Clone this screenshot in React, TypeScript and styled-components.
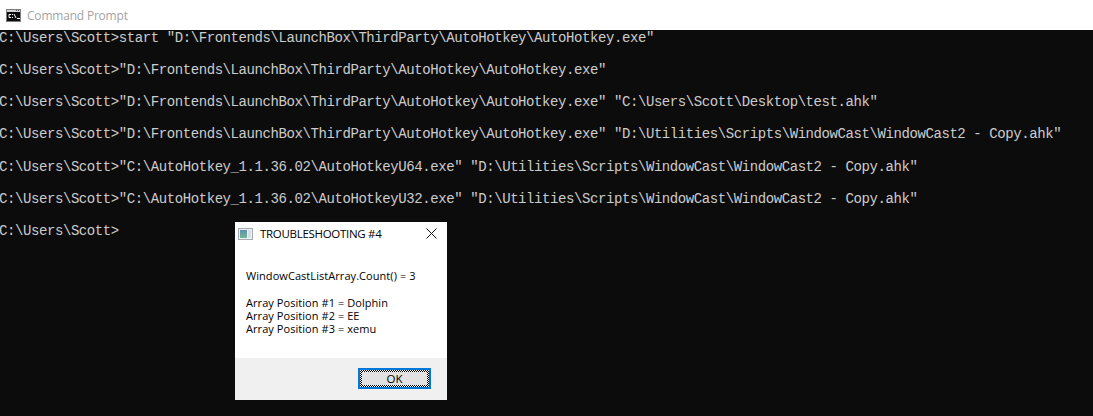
import styled, { createGlobalStyle } from 'styled-components';

const lines = [
  'C:\\Users\\Scott>start "D:\\Frontends\\LaunchBox\\ThirdParty\\AutoHotkey\\AutoHotkey.exe"',
  'C:\\Users\\Scott>"D:\\Frontends\\LaunchBox\\ThirdParty\\AutoHotkey\\AutoHotkey.exe"',
  'C:\\Users\\Scott>"D:\\Frontends\\LaunchBox\\ThirdParty\\AutoHotkey\\AutoHotkey.exe" "C:\\Users\\Scott\\Desktop\\test.ahk"',
  'C:\\Users\\Scott>"D:\\Frontends\\LaunchBox\\ThirdParty\\AutoHotkey\\AutoHotkey.exe" "D:\\Utilities\\Scripts\\WindowCast\\WindowCast2 - Copy.ahk"',
  'C:\\Users\\Scott>"C:\\AutoHotkey_1.1.36.02\\AutoHotkeyU64.exe" "D:\\Utilities\\Scripts\\WindowCast\\WindowCast2 - Copy.ahk"',
  'C:\\Users\\Scott>"C:\\AutoHotkey_1.1.36.02\\AutoHotkeyU32.exe" "D:\\Utilities\\Scripts\\WindowCast\\WindowCast2 - Copy.ahk"',
  'C:\\Users\\Scott>',
];

export default function App() {
  return (
    <>
      <GlobalStyle />
      <Window>
        <TitleBar>
          <svg width="15" height="13" viewBox="0 0 15 13">
            <rect x="0.5" y="0.5" width="14" height="12" fill="#0c0c0c" stroke="#7d7d7d" />
            <rect x="1" y="1" width="13" height="2" fill="#d4d4d4" />
            <path d="M10 1.5h1M12 1.5h1" stroke="#555" fill="none" />
            <path d="M5 5.5H3v3h2M6.5 5v1M6.5 8v1M8 5l2 4M11 9.5h3" stroke="#fff" fill="none" />
          </svg>
          <TitleText>Command Prompt</TitleText>
        </TitleBar>
        <Console>
          {lines.map((line) => (
            <ConsoleLine key={line}>{line}</ConsoleLine>
          ))}
        </Console>
        <Dialog>
          <DialogHeader>
            <svg width="15" height="12" viewBox="0 0 15 12">
              <defs>
                <linearGradient id="pane" x1="0" y1="0" x2="0" y2="1">
                  <stop offset="0" stopColor="#5f8fb5" />
                  <stop offset="1" stopColor="#74b88f" />
                </linearGradient>
              </defs>
              <rect x="0.5" y="0.5" width="14" height="11" fill="#eef1f2" stroke="#a4acb0" />
              <rect x="2" y="2" width="7" height="8" fill="url(#pane)" />
              <rect x="10" y="2" width="3" height="8" fill="#d9dfe2" />
            </svg>
            <DialogTitle>TROUBLESHOOTING #4</DialogTitle>
            <svg width="11" height="11" viewBox="0 0 11 11">
              <path d="M0.5 0.5l10 10M10.5 0.5l-10 10" stroke="#111" strokeWidth="1" fill="none" />
            </svg>
          </DialogHeader>
          <DialogBody>
            <p>WindowCastListArray.Count() = 3</p>
            <p>
              Array Position #1 = Dolphin
              <br />
              Array Position #2 = EE
              <br />
              Array Position #3 = xemu
            </p>
          </DialogBody>
          <DialogFooter>
            <OkButton>
              <OkLabel>OK</OkLabel>
            </OkButton>
          </DialogFooter>
        </Dialog>
      </Window>
    </>
  );
}

const GlobalStyle = createGlobalStyle`
  html, body {
    margin: 0;
    padding: 0;
    background: #0c0c0c;
  }
`;

const Window = styled.div`
  position: relative;
  width: 1093px;
  height: 416px;
  overflow: hidden;
  background: #0c0c0c;
`;

const TitleBar = styled.div`
  height: 30px;
  box-sizing: border-box;
  padding-left: 6px;
  display: flex;
  align-items: center;
  gap: 6px;
  background: #fff;
`;

const TitleText = styled.span`
  font: 12px "Open Sans", sans-serif;
  letter-spacing: -0.2px;
  color: #a3a3a3;
`;

const Console = styled.div`
  margin-left: -1px;
  display: flex;
  flex-direction: column;
  gap: 16.16px;
`;

const ConsoleLine = styled.div`
  height: 16px;
  font: 14px/16px "Liberation Mono", monospace;
  letter-spacing: -0.415px;
  color: #ccc;
  white-space: pre;
`;

const Dialog = styled.div`
  position: absolute;
  left: 235px;
  top: 222px;
  width: 212px;
  height: 178px;
  display: flex;
  flex-direction: column;
  background: #fff;
`;

const DialogHeader = styled.div`
  height: 23px;
  padding: 0 10px 0 3px;
  display: flex;
  align-items: center;
  gap: 7px;
`;

const DialogTitle = styled.span`
  flex: 1;
  font: 11.5px "Open Sans", sans-serif;
  letter-spacing: -0.3px;
  color: #000;
`;

const DialogBody = styled.div`
  flex: 1;
  padding: 24px 11px 0;
  font: 11px/13px "Open Sans", sans-serif;
  letter-spacing: 0.06px;
  color: #000;

  p {
    margin: 0 0 14px;
  }
`;

const DialogFooter = styled.div`
  height: 42px;
  padding: 10px 16px 0 0;
  box-sizing: border-box;
  display: flex;
  justify-content: flex-end;
  align-items: flex-start;
  background: #f0f0f0;
`;

const OkButton = styled.button`
  width: 73px;
  height: 21px;
  padding: 2px;
  box-sizing: border-box;
  border: 2px solid #0078d7;
  background: repeating-conic-gradient(#000 0 25%, #fff 0 50%) 0 0 / 2px 2px;
  display: flex;
`;

const OkLabel = styled.span`
  flex: 1;
  background: #e1e1e1;
  font: 11.5px/13px "Open Sans", sans-serif;
  color: #000;
`;
